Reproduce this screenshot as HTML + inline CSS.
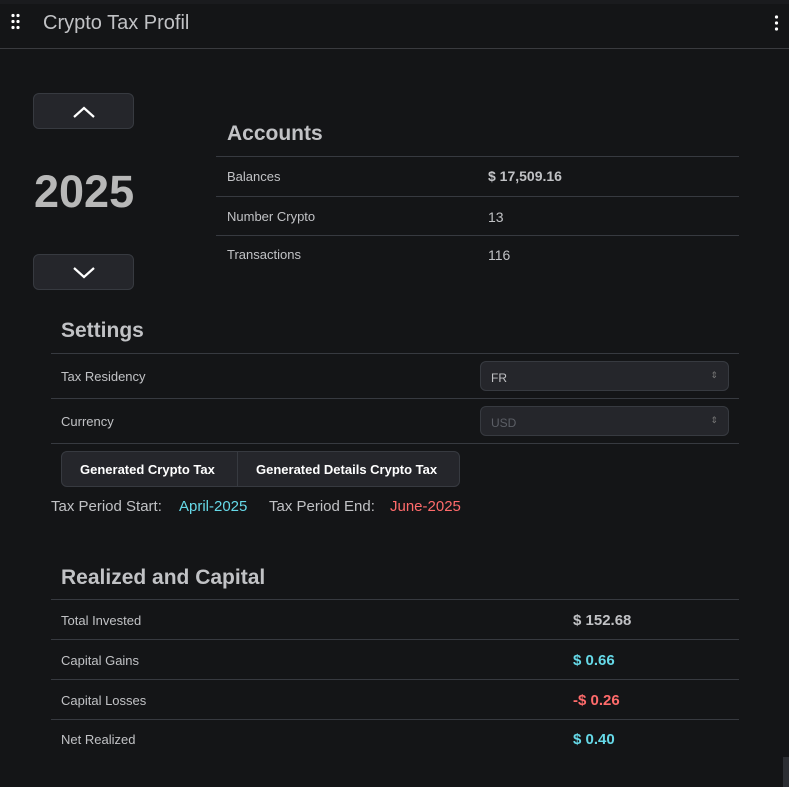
<!DOCTYPE html>
<html><head><style>
*{margin:0;padding:0;box-sizing:border-box}
body{width:789px;height:787px;background:#141517;color:#c1c2c5;font-family:"Liberation Sans",sans-serif;position:relative;overflow:hidden}
.abs{position:absolute}
.line{position:absolute;height:1px;background:#373a40}
.t{position:absolute;font-size:13px;color:#c1c2c5;white-space:nowrap}
.b{font-weight:bold;font-size:15px}
.h{position:absolute;font-weight:bold;font-size:21px;color:#c1c2c5}
.btn{position:absolute;background:#25262b;border:1px solid #373a40;border-radius:6px}
.sel{position:absolute;background:#25262b;border:1px solid #373a40;border-radius:6px;font-size:12px;padding:9px 10px;color:#c1c2c5}
</style></head><body>
<div class="abs" style="left:0;top:0;width:789px;height:4px;background:#1a1b1e"></div>
<div class="abs" style="left:11px;top:13px;width:8px;height:18px">
<svg width="9" height="18"><g fill="#fff"><circle cx="2" cy="2.5" r="1.6"/><circle cx="7" cy="2.5" r="1.6"/><circle cx="2" cy="8.5" r="1.6"/><circle cx="7" cy="8.5" r="1.6"/><circle cx="2" cy="14.5" r="1.6"/><circle cx="7" cy="14.5" r="1.6"/></g></svg></div>
<div class="t" style="left:43px;top:12px;font-size:20px">Crypto Tax Profil</div>
<svg class="abs" style="left:774px;top:15px" width="5" height="16"><g fill="#fff"><circle cx="2.5" cy="2" r="1.6"/><circle cx="2.5" cy="8" r="1.6"/><circle cx="2.5" cy="14" r="1.6"/></g></svg>
<div class="line" style="left:0;top:48px;width:789px;background:#3a3b3f"></div>

<div class="btn" style="left:33px;top:93px;width:101px;height:36px"><svg class="abs" style="left:38px;top:11px" width="24" height="14"><path d="M2 12 L12 3 L22 12" stroke="#fff" stroke-width="2.2" fill="none"/></svg></div>
<div class="abs" style="left:34px;top:166px;font-size:45px;font-weight:bold;color:#b8b8b8">2025</div>
<div class="btn" style="left:33px;top:254px;width:101px;height:36px"><svg class="abs" style="left:38px;top:10px" width="24" height="14"><path d="M2 3 L12 12 L22 3" stroke="#fff" stroke-width="2.2" fill="none"/></svg></div>

<div class="h" style="left:227px;top:122px">Accounts</div>
<div class="line" style="left:216px;top:156px;width:523px"></div>
<div class="t" style="left:227px;top:169px">Balances</div><div class="t b" style="left:488px;top:168px;font-size:14px">$ 17,509.16</div>
<div class="line" style="left:216px;top:196px;width:523px"></div>
<div class="t" style="left:227px;top:209px">Number Crypto</div><div class="t" style="left:488px;top:209px;font-size:14px">13</div>
<div class="line" style="left:216px;top:235px;width:523px"></div>
<div class="t" style="left:227px;top:247px">Transactions</div><div class="t" style="left:488px;top:247px;font-size:14px">116</div>

<div class="h" style="left:61px;top:319px">Settings</div>
<div class="line" style="left:51px;top:353px;width:688px"></div>
<div class="t" style="left:61px;top:369px">Tax Residency</div>
<div class="sel" style="left:480px;top:361px;width:249px;height:30px">FR<span style="position:absolute;right:10px;top:8px;font-size:9px;color:#777">⇕</span></div>
<div class="line" style="left:51px;top:398px;width:688px"></div>
<div class="t" style="left:61px;top:414px">Currency</div>
<div class="sel" style="left:480px;top:406px;width:249px;height:30px;color:#5c5f66">USD<span style="position:absolute;right:10px;top:8px;font-size:9px;color:#777">⇕</span></div>
<div class="line" style="left:51px;top:443px;width:688px"></div>
<div class="btn" style="left:61px;top:451px;width:399px;height:36px;font-weight:bold;font-size:13px;color:#fff">
<span class="abs" style="left:18px;top:10px">Generated Crypto Tax</span>
<div class="abs" style="left:175px;top:0;width:1px;height:34px;background:#373a40"></div>
<span class="abs" style="left:194px;top:10px">Generated Details Crypto Tax</span></div>
<div class="t" style="left:51px;top:498px;font-size:15px">Tax Period Start:</div>
<div class="t" style="left:179px;top:498px;font-size:15px;color:#66d9e8">April-2025</div>
<div class="t" style="left:269px;top:498px;font-size:15px">Tax Period End:</div>
<div class="t" style="left:390px;top:498px;font-size:15px;color:#ff6b6b">June-2025</div>

<div class="h" style="left:61px;top:566px">Realized and Capital</div>
<div class="line" style="left:51px;top:599px;width:688px"></div>
<div class="t" style="left:61px;top:613px">Total Invested</div><div class="t b" style="left:573px;top:612px">$ 152.68</div>
<div class="line" style="left:51px;top:639px;width:688px"></div>
<div class="t" style="left:61px;top:653px">Capital Gains</div><div class="t b" style="left:573px;top:652px;color:#66d9e8">$ 0.66</div>
<div class="line" style="left:51px;top:679px;width:688px"></div>
<div class="t" style="left:61px;top:693px">Capital Losses</div><div class="t b" style="left:573px;top:692px;color:#ff6b6b">-$ 0.26</div>
<div class="line" style="left:51px;top:719px;width:688px"></div>
<div class="t" style="left:61px;top:732px">Net Realized</div><div class="t b" style="left:573px;top:731px;color:#66d9e8">$ 0.40</div>
<div class="abs" style="left:783px;top:757px;width:6px;height:30px;background:#2c2e33"></div>
</body></html>
